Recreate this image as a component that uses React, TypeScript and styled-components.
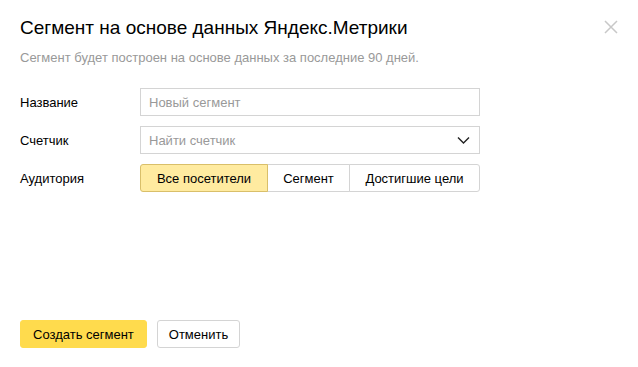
import styled, { createGlobalStyle } from "styled-components";

const GlobalStyle = createGlobalStyle`
  html, body {
    margin: 0;
    padding: 0;
    background: #fff;
  }
  body {
    font-family: "Liberation Sans", Arial, sans-serif;
    color: #000;
  }
  * {
    box-sizing: border-box;
  }
`;

const Dialog = styled.div`
  position: relative;
  display: flex;
  flex-direction: column;
  width: 638px;
  height: 367px;
  padding: 16px 20px 19px 20px;
`;

const Title = styled.h1`
  margin: 0;
  font-family: "Liberation Sans", Arial, sans-serif;
  font-size: 19px;
  font-weight: 400;
  line-height: 24px;
  color: #000;
`;

const Subtitle = styled.p`
  margin: 10px 0 0 0;
  font-size: 13px;
  line-height: 16px;
  color: #999;
`;

const CloseButton = styled.button`
  position: absolute;
  top: 19px;
  right: 19px;
  width: 16px;
  height: 16px;
  padding: 0;
  border: 0;
  background: none;
  cursor: pointer;
  svg {
    display: block;
  }
`;

const Form = styled.div`
  display: grid;
  grid-template-columns: 120px 340px;
  grid-auto-rows: 28px;
  row-gap: 10px;
  margin-top: 22px;
`;

const Label = styled.div`
  display: flex;
  align-items: center;
  font-size: 13px;
  color: #000;
`;

const Field = styled.div`
  position: relative;
  display: flex;
  align-items: center;
  height: 28px;
  padding: 0 8px;
  border: 1px solid #d4d4d4;
  font-size: 13px;
  color: #999;
`;

const Chevron = styled.svg`
  position: absolute;
  right: 9px;
  top: 10px;
`;

const Segmented = styled.div`
  display: flex;
  height: 28px;
`;

const SegmentButton = styled.button<{ $active?: boolean; $grow: number }>`
  flex: 0 0 ${(p) => p.$grow}px;
  height: 28px;
  padding: 0;
  margin-left: -1px;
  font-family: "Liberation Sans", Arial, sans-serif;
  font-size: 13px;
  color: #000;
  background: ${(p) => (p.$active ? "#ffeba0" : "#fff")};
  border: 1px solid ${(p) => (p.$active ? "#d9bf6a" : "#d4d4d4")};
  position: relative;
  z-index: ${(p) => (p.$active ? 1 : 0)};
  cursor: pointer;
  &:first-child {
    margin-left: 0;
    border-radius: 3px 0 0 3px;
  }
  &:last-child {
    border-radius: 0 3px 3px 0;
  }
`;

const Footer = styled.div`
  display: flex;
  gap: 10px;
  margin-top: auto;
`;

const Button = styled.button<{ $primary?: boolean }>`
  height: 28px;
  padding: 0 ${(p) => (p.$primary ? "12px" : "11px")};
  font-family: "Liberation Sans", Arial, sans-serif;
  font-size: 13px;
  color: #000;
  border-radius: 3px;
  border: 1px solid ${(p) => (p.$primary ? "#ffdb4d" : "#d4d4d4")};
  background: ${(p) => (p.$primary ? "#ffdb4d" : "#fff")};
  cursor: pointer;
`;

export default function App() {
  return (
    <>
      <GlobalStyle />
      <Dialog>
        <Title>Сегмент на основе данных Яндекс.Метрики</Title>
        <Subtitle>Сегмент будет построен на основе данных за последние 90 дней.</Subtitle>
        <CloseButton aria-label="Закрыть">
          <svg width="16" height="16" viewBox="0 0 16 16">
            <path d="M2 2L14 14M14 2L2 14" stroke="#c8c8c8" strokeWidth="1.5" />
          </svg>
        </CloseButton>
        <Form>
          <Label>Название</Label>
          <Field>Новый сегмент</Field>
          <Label>Счетчик</Label>
          <Field>
            Найти счетчик
            <Chevron width="13" height="7" viewBox="0 0 13 7">
              <path d="M1 0.5L6.5 6L12 0.5" fill="none" stroke="#222" strokeWidth="1.4" />
            </Chevron>
          </Field>
          <Label>Аудитория</Label>
          <Segmented>
            <SegmentButton $active $grow={128}>Все посетители</SegmentButton>
            <SegmentButton $grow={83}>Сегмент</SegmentButton>
            <SegmentButton $grow={131}>Достигшие цели</SegmentButton>
          </Segmented>
        </Form>
        <Footer>
          <Button $primary>Создать сегмент</Button>
          <Button>Отменить</Button>
        </Footer>
      </Dialog>
    </>
  );
}
